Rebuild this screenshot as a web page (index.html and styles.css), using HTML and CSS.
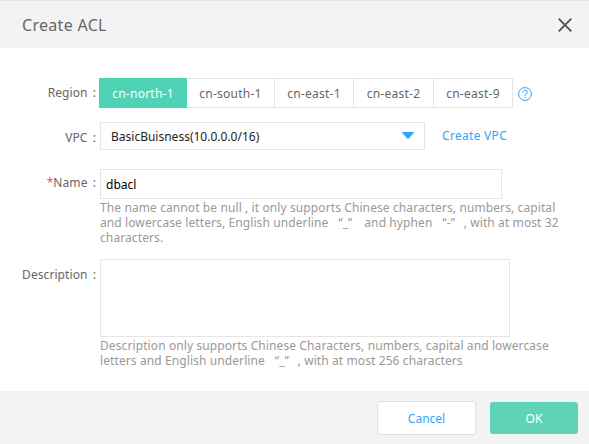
FILE: index.html
```html
<!DOCTYPE html>
<html lang="en">
<head>
<meta charset="utf-8">
<title>Create ACL</title>
<link rel="stylesheet" href="styles.css">
</head>
<body>
<div class="dialog">
  <header class="header">
    <h1 class="title">Create ACL</h1>
    <svg class="close" width="14" height="14" viewBox="0 0 14 14"><path d="M0.7 0.7L13.3 13.3M13.3 0.7L0.7 13.3" fill="none" stroke="#555" stroke-width="1.9"/></svg>
  </header>
  <main class="form">
    <div class="row region">
      <label class="label">Region :</label>
      <div class="tabs">
        <span class="tab active">cn-north-1</span>
        <span class="tab">cn-south-1</span>
        <span class="tab">cn-east-1</span>
        <span class="tab">cn-east-2</span>
        <span class="tab">cn-east-9</span>
      </div>
      <svg class="help" width="14" height="14" viewBox="0 0 14 14" fill="none" stroke="#2ca6fb"><circle cx="7" cy="7" r="6.4"/><path d="M4.7 5.5C4.7 2.4 9.4 2.6 9.4 5.2C9.4 7 7 6.9 7 8.9M7 9.8V11"/></svg>
    </div>
    <div class="row vpc">
      <label class="label">VPC :</label>
      <div class="select"><span>BasicBuisness(10.0.0.0/16)</span><svg width="12" height="7" viewBox="0 0 12 7"><path d="M0 0.8Q0 0 1 0H11Q12 0 12 0.8L7 6.3Q6 7 5 6.3Z" fill="#2ca6fb"/></svg></div>
      <a class="link">Create VPC</a>
    </div>
    <div class="row name">
      <label class="label"><span class="star">*</span>Name :</label>
      <div class="field">
        <div class="input">dbacl</div>
        <p class="hint">The name cannot be null , it only supports Chinese characters, numbers, capital<br>and lowercase letters, English underline <i class="open">“</i>_<i class="shut">”</i> and hyphen <i class="open">“</i>-<i class="shut">”</i>, with at most 32<br>characters.</p>
      </div>
    </div>
    <div class="row description">
      <label class="label">Description :</label>
      <div class="field">
        <div class="textarea"></div>
        <p class="hint">Description only supports Chinese Characters, numbers, capital and lowercase<br>letters and English underline <i class="open">“</i>_<i class="shut">”</i>, with at most 256 characters</p>
      </div>
    </div>
  </main>
  <footer class="footer">
    <div class="button cancel">Cancel</div>
    <div class="button ok">OK</div>
  </footer>
</div>
</body>
</html>
```
FILE: styles.css
```css
* { box-sizing: border-box; }
body { margin: 0; background: #fff; color: #666; font: 12px/15px "Noto Sans", sans-serif; }
.dialog { width: 589px; height: 444px; display: flex; flex-direction: column; overflow: hidden; }
.header { height: 48px; flex: none; background: #f3f3f3; border-top: 1px solid #e5e5e5; display: flex; align-items: center; justify-content: space-between; padding: 1px 17px 0 22px; }
.title { margin: 0; font-size: 16px; line-height: 24px; font-weight: 400; letter-spacing: 0.3px; white-space: nowrap; }
.form { height: 343px; flex: none; padding-top: 30px; }
.row { display: flex; align-items: flex-start; white-space: nowrap; }
.label { width: 96px; flex: none; text-align: right; margin-right: 4px; word-spacing: 2px; letter-spacing: 0.08px; }
.region { height: 44px; }
.region .label { padding-top: 7px; margin-right: 3px; }
.tabs { display: flex; width: 414px; height: 30px; border: 1px solid #e5e5e5; letter-spacing: 0.25px; }
.tab { width: 79px; border-right: 1px solid #e5e5e5; text-align: center; line-height: 29px; }
.tab:nth-child(2) { width: 88px; }
.tab:nth-child(4) { width: 80px; }
.tab:last-child { border-right: 0; width: 78px; }
.tab.active { width: 88px; height: 30px; margin: -1px 0 -1px -1px; background: #50d2b5; color: #fff; border: 0; line-height: 31px; }
.help { margin: 9px 0 0 5px; }
.vpc { height: 47px; }
.vpc .label { padding-top: 8px; }
.select { width: 325px; height: 28px; border: 1px solid #e5e5e5; color: #222; display: flex; align-items: center; justify-content: space-between; padding: 0 10px; }
.select svg { margin-top: -1px; }
.link { color: #2ca6fb; letter-spacing: 0.3px; margin: 6px 0 0 17px; }
.name { height: 90px; }
.name .label { padding-top: 6px; }
.star { color: #f25a4a; }
.input { width: 402px; height: 30px; border: 1px solid #e5e5e5; color: #000; line-height: 29px; padding-left: 5px; }
.hint { margin: 1px 0 0; color: #999; letter-spacing: 0.1px; }
.hint i { display: inline-block; font-style: normal; line-height: 12px; }
.hint .open { width: 11px; text-align: right; }
.hint .shut { width: 13px; }
.description .label { padding-top: 8px; }
.textarea { width: 410px; height: 78px; border: 1px solid #e5e5e5; }
.footer { height: 53px; background: #f3f3f3; display: flex; padding: 10px 11px 0 0; justify-content: flex-end; gap: 14px; }
.button { border-radius: 3px; text-align: center; }
.cancel { width: 99px; height: 34px; background: #fff; border: 1px solid #dce3ea; color: #2ca6fb; line-height: 33px; }
.ok { width: 88px; height: 32px; margin-top: 1px; background: #5fd3b7; color: #fff; line-height: 33px; }
```
